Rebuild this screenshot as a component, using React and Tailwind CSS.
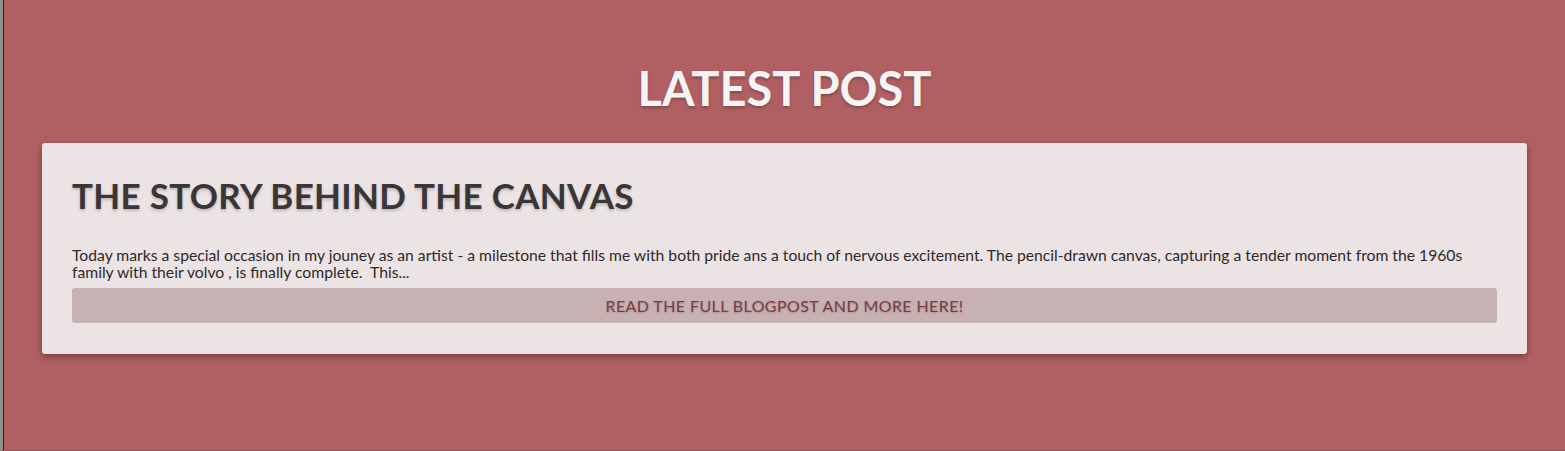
export default function App() {
  return (
    <div
      className="h-[451px] w-full bg-[#b06062] border-l-[3px] border-l-[#8f8f8f] border-b border-b-[#9a5354] overflow-hidden"
      style={{ fontFamily: 'Lato, "Open Sans", sans-serif' }}
    >
      <div className="border-l border-l-[#1f1f1f] h-full pt-[60px]">
        <h1 className="text-center text-[47px] leading-[56px] font-bold text-[#f7f4f6] [text-shadow:0_2px_3px_rgba(0,0,0,0.25)]">
          LATEST POST
        </h1>
        <div className="mx-[38px] mt-[27px] rounded-[3px] bg-[#ece3e4] px-[30px] pt-[32px] pb-[31px] shadow-[0_3px_6px_rgba(60,20,20,0.45)]">
          <h2 className="text-[35px] leading-[40px] font-bold text-[#3a3536] tracking-[0.3px] [text-shadow:0_2px_3px_rgba(0,0,0,0.2)]">
            THE STORY BEHIND THE CANVAS
          </h2>
          <p className="mt-[32px] text-[15.7px] leading-[17px] text-[#2e292a]">
            Today marks a special occasion in my jouney as an artist - a milestone that fills me with both pride ans a touch of nervous excitement. The pencil-drawn canvas, capturing a tender moment from the 1960s family with their volvo , is finally complete.&nbsp; This...
          </p>
          <button className="mt-[7px] block w-full h-[35px] rounded-[3px] bg-[#c8b1b2] text-[16px] text-[#7b3d41] tracking-[0.4px] [text-shadow:0_1px_2px_rgba(0,0,0,0.2)]">
            READ THE FULL BLOGPOST AND MORE HERE!
          </button>
        </div>
      </div>
    </div>
  )
}
